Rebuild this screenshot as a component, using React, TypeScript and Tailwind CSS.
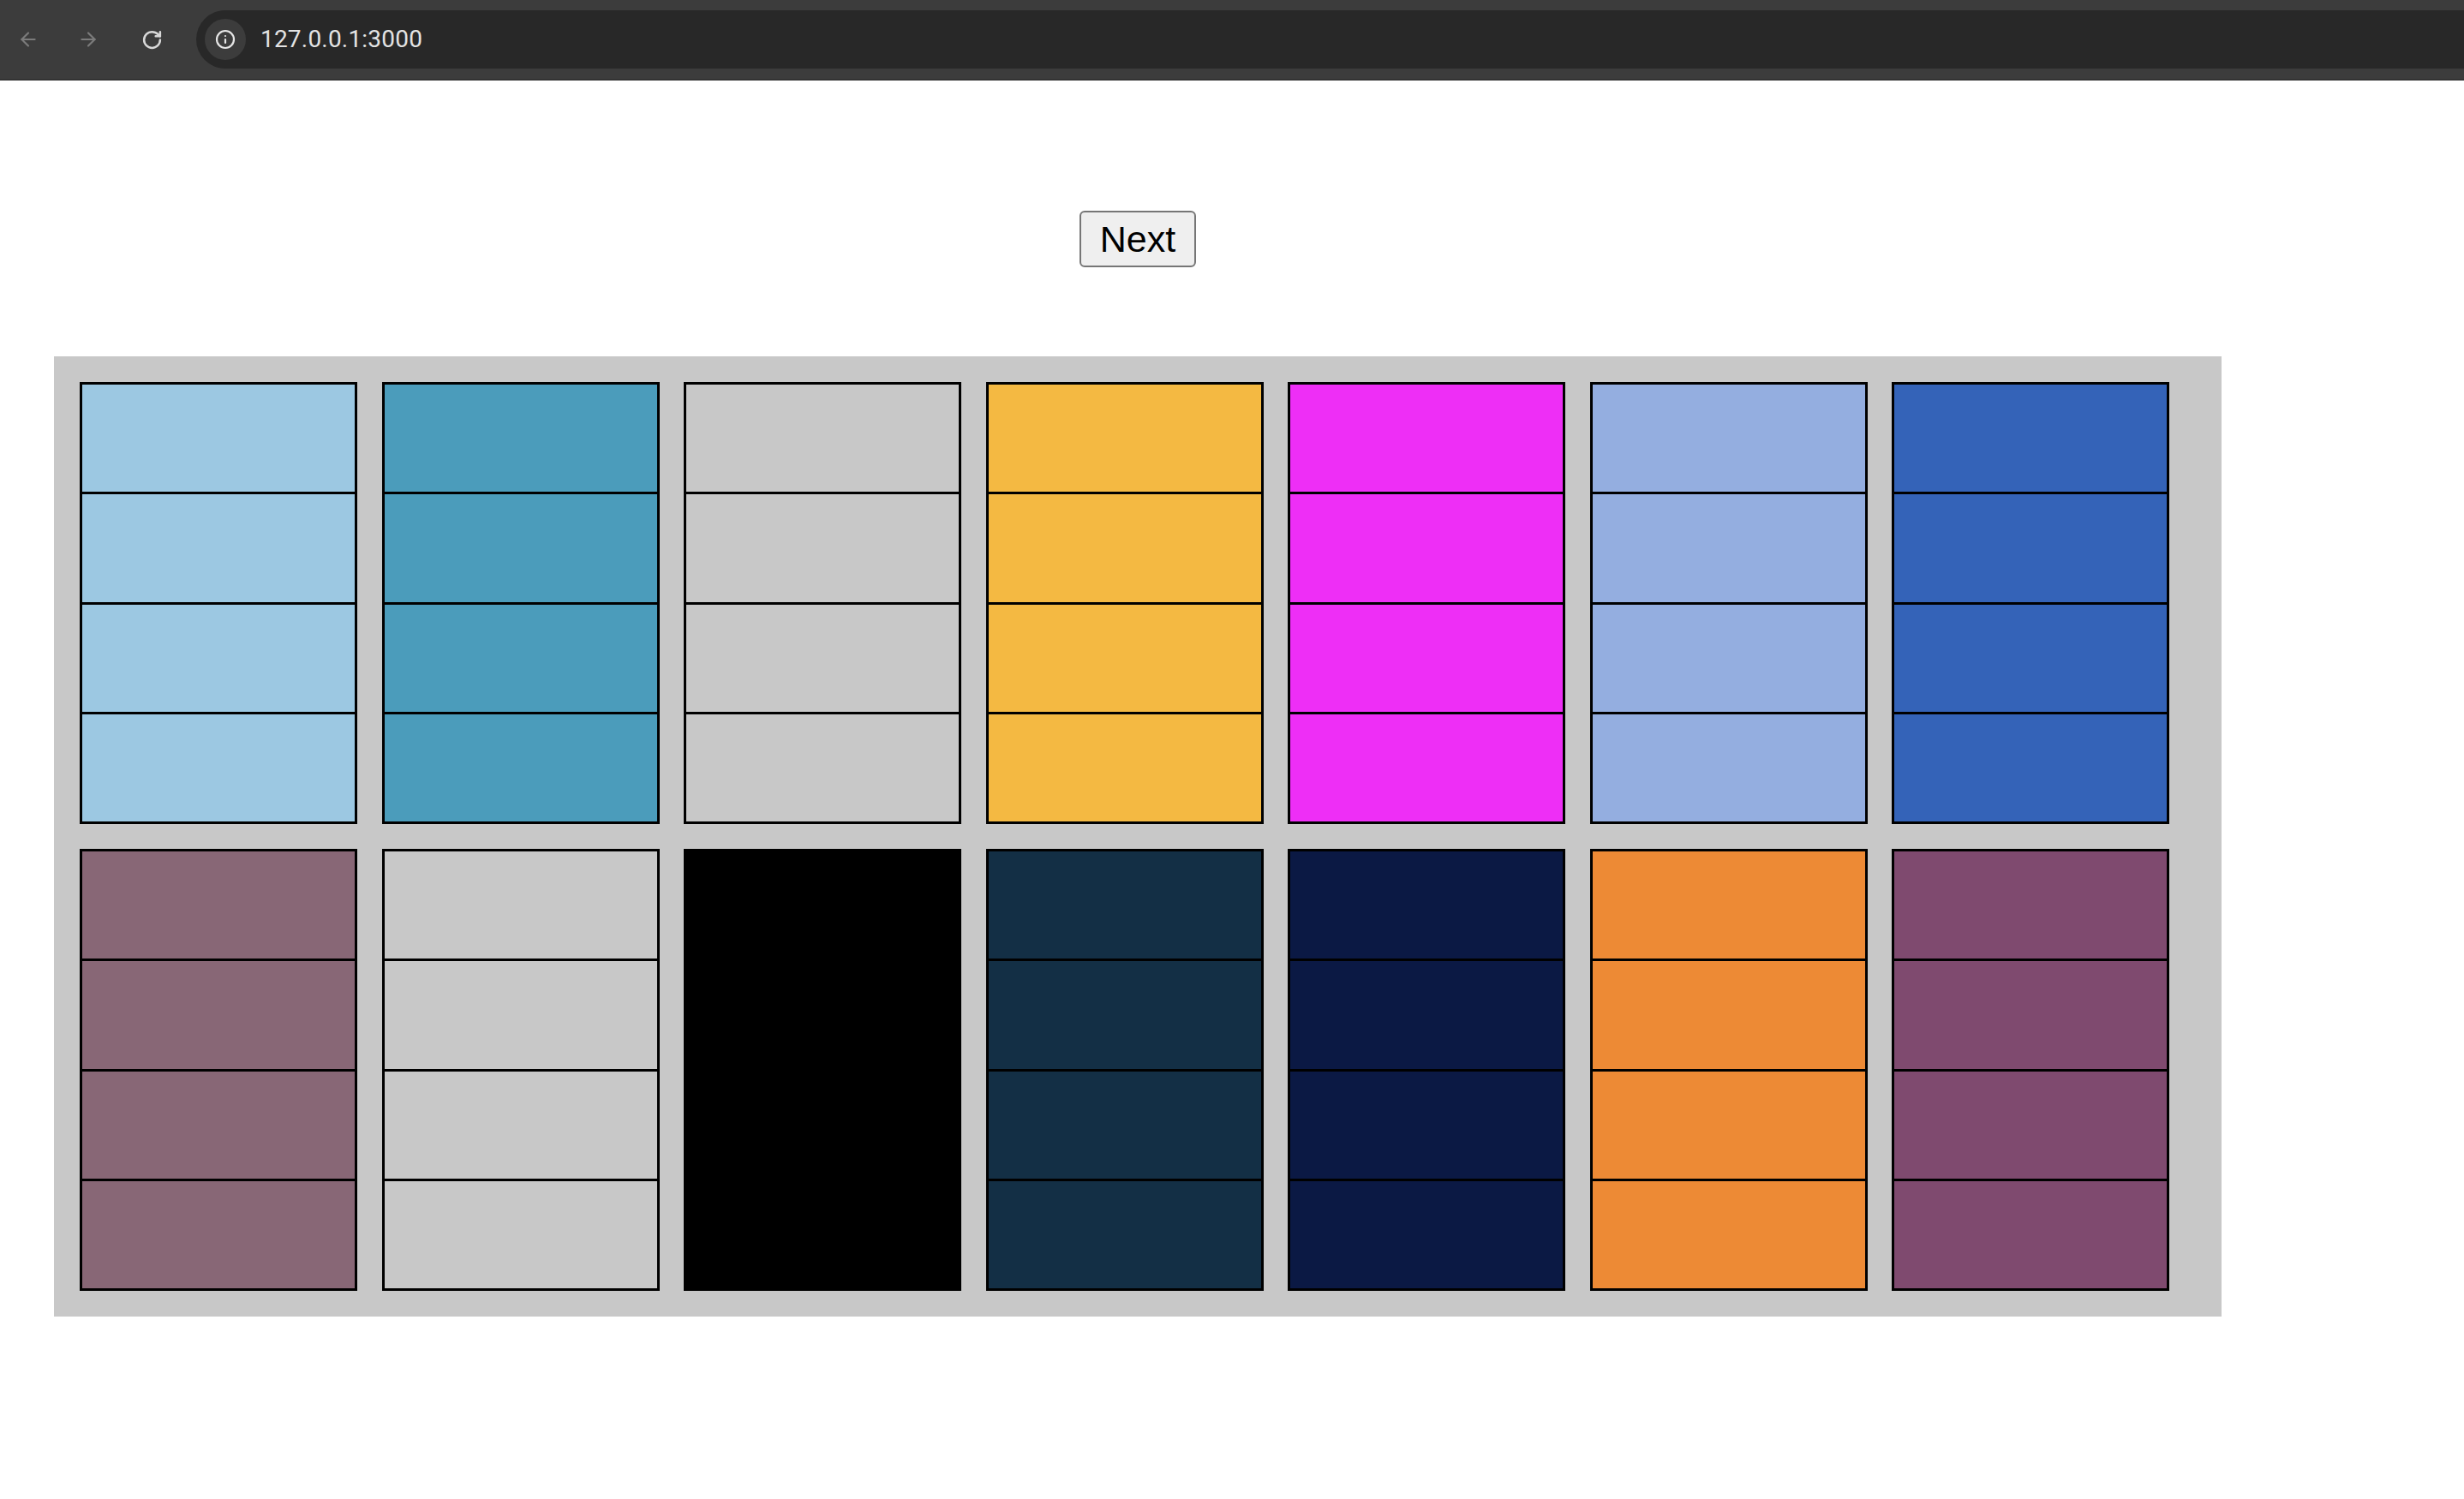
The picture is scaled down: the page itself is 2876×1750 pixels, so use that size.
import { ArrowLeft, ArrowRight, RotateCw, Info } from 'lucide-react';

const rows = [
  ['#9cc8e2', '#4b9cbb', '#c8c8c8', '#f4b942', '#ee2ef6', '#94aee0', '#3463b8'],
  ['#886776', '#c8c8c8', '#000000', '#132f45', '#0b1944', '#ed8a35', '#7f4a6f'],
];

function BrowserBar() {
  return (
    <div className="h-[94px] bg-[#3c3c3c] border-b-2 border-[#333333] pt-3 flex items-start">
      <div className="flex items-center h-[68px] w-[229px] shrink-0">
        <div className="w-[66px] flex justify-center">
          <ArrowLeft size={26} strokeWidth={2} className="text-[#7b7b7b]" />
        </div>
        <div className="w-[74px] flex justify-center">
          <ArrowRight size={26} strokeWidth={2} className="text-[#7b7b7b]" />
        </div>
        <div className="w-[74px] flex justify-center">
          <RotateCw size={25} strokeWidth={2.4} className="text-[#d8d8d8]" />
        </div>
      </div>
      <div className="flex-1 h-[68px] bg-[#282828] rounded-l-[34px] flex items-center pl-[10px]">
        <div className="w-[48px] h-[48px] rounded-full bg-[#3c3c3c] flex items-center justify-center">
          <Info size={24} strokeWidth={2.2} className="text-[#e6e6e6]" />
        </div>
        <span className="ml-[17px] text-[28px] text-[#e3e3e3] tracking-[0.2px] font-['Roboto',sans-serif]">
          127.0.0.1:3000
        </span>
      </div>
    </div>
  );
}

function Column({ color }: { color: string }) {
  return (
    <div className="w-[324px] h-[516px] border-[3px] border-black flex flex-col divide-y-[3px] divide-black">
      {[0, 1, 2, 3].map((i) => (
        <div key={i} className="flex-1" style={{ backgroundColor: color }} />
      ))}
    </div>
  );
}

export default function App() {
  return (
    <div className="min-h-screen bg-white font-['Liberation_Sans',Arial,sans-serif]">
      <BrowserBar />
      <div className="ml-[63px] w-[2530px]">
        <div className="flex justify-center pt-[152px]">
          <button className="w-[136px] h-[66px] border-2 border-[#767676] rounded-[6px] bg-[#efefef] text-[43px] text-black leading-none font-['Liberation_Sans',Arial,sans-serif]">
            Next
          </button>
        </div>
        <div className="mt-[104px] bg-[#c8c8c8] pl-[30px] py-[30px] flex flex-col gap-y-[29px]">
          {rows.map((row, r) => (
            <div key={r} className="flex gap-x-[28.5px]">
              {row.map((c, i) => (
                <Column key={i} color={c} />
              ))}
            </div>
          ))}
        </div>
      </div>
    </div>
  );
}
